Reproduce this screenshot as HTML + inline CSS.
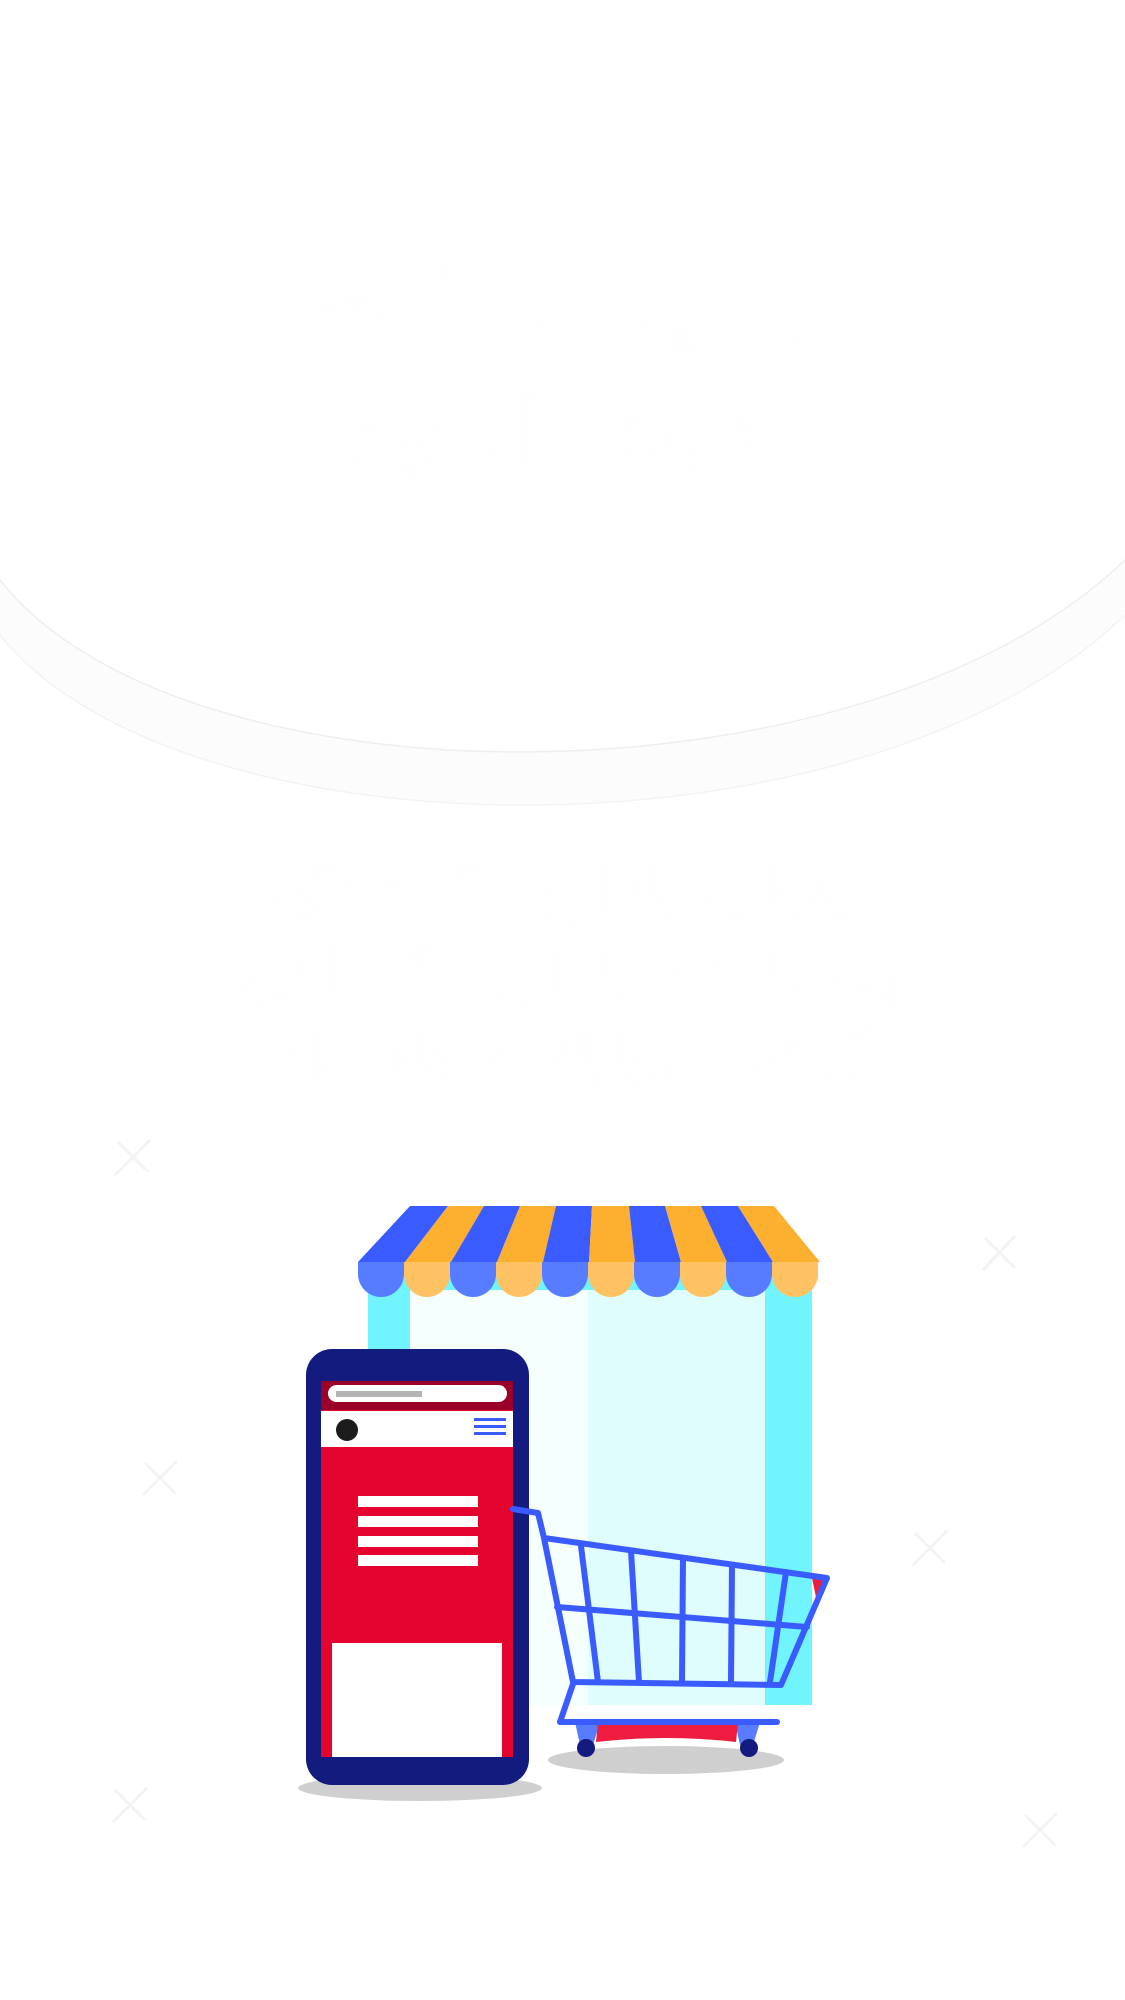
<!DOCTYPE html>
<html><head><meta charset="utf-8"><style>
html,body{margin:0;padding:0;background:#fff;}
body{width:1125px;height:2000px;position:relative;overflow:hidden;font-family:"Liberation Sans","Noto Sans CJK SC",sans-serif;}
.t{position:absolute;left:0;width:1125px;text-align:center;color:#fff;font-weight:bold;direction:rtl;text-shadow:0 0 1px #f6f6f6;}
</style></head><body>
<div class="t" style="top:240px;font-size:88px;line-height:130px;">به چی مارکت<br>خوش آمدید</div>
<div class="t" style="top:850px;font-size:58px;line-height:82px;">اینجا یه بازار بزرگ خانگیه<br>چی مارکت بازار بزرگ را توی<br>گوشی موبایلتون جای داده</div>
<svg width="1125" height="2000" style="position:absolute;left:0;top:0" viewBox="0 0 1125 2000">
<path d="M0 635 C 180 860 860 870 1125 615 L1125 560 C 860 815 180 810 0 580 Z" fill="#fcfcfc"/>
<path d="M0 580 C 180 810 860 815 1125 560" fill="none" stroke="#eeeeee" stroke-width="1.5"/>
<path d="M0 635 C 180 860 860 870 1125 615" fill="none" stroke="#f3f3f3" stroke-width="1.5"/>
<g stroke="#f3f3f3" stroke-width="3" fill="none">
<path d="M118 1142 L148 1172 M150 1140 L115 1175"/>
<path d="M985 1238 L1015 1268 M1015 1236 L983 1270"/>
<path d="M145 1463 L175 1493 M177 1461 L143 1495"/>
<path d="M915 1533 L945 1563 M947 1531 L913 1565"/>
<path d="M115 1790 L145 1820 M147 1788 L113 1822"/>
<path d="M1025 1815 L1055 1845 M1057 1813 L1023 1847"/>
</g>
<rect x="368" y="1270" width="444" height="435" fill="#72f4fe"/>
<rect x="410" y="1290" width="178" height="415" fill="#f5fffe"/>
<rect x="588" y="1290" width="177" height="415" fill="#e0fdfd"/>
<g>
<polygon points="358,1262 410,1206 448,1206 405,1262" fill="#3a5bff"/>
<polygon points="405,1262 448,1206 484,1206 451,1262" fill="#fdb02f"/>
<polygon points="451,1262 484,1206 520,1206 497,1262" fill="#3a5bff"/>
<polygon points="497,1262 520,1206 556,1206 543,1262" fill="#fdb02f"/>
<polygon points="543,1262 556,1206 592,1206 589,1262" fill="#3a5bff"/>
<polygon points="589,1262 592,1206 629,1206 635,1262" fill="#fdb02f"/>
<polygon points="635,1262 629,1206 665,1206 681,1262" fill="#3a5bff"/>
<polygon points="681,1262 665,1206 701,1206 727,1262" fill="#fdb02f"/>
<polygon points="727,1262 701,1206 738,1206 773,1262" fill="#3a5bff"/>
<polygon points="773,1262 738,1206 774,1206 820,1262" fill="#fdb02f"/>
</g>
<g>
<path d="M358 1262 h46 v12 a23 23 0 0 1 -46 0z" fill="#577cff"/>
<path d="M404 1262 h46 v12 a23 23 0 0 1 -46 0z" fill="#fec263"/>
<path d="M450 1262 h46 v12 a23 23 0 0 1 -46 0z" fill="#577cff"/>
<path d="M496 1262 h46 v12 a23 23 0 0 1 -46 0z" fill="#fec263"/>
<path d="M542 1262 h46 v12 a23 23 0 0 1 -46 0z" fill="#577cff"/>
<path d="M588 1262 h46 v12 a23 23 0 0 1 -46 0z" fill="#fec263"/>
<path d="M634 1262 h46 v12 a23 23 0 0 1 -46 0z" fill="#577cff"/>
<path d="M680 1262 h46 v12 a23 23 0 0 1 -46 0z" fill="#fec263"/>
<path d="M726 1262 h46 v12 a23 23 0 0 1 -46 0z" fill="#577cff"/>
<path d="M772 1262 h46 v12 a23 23 0 0 1 -46 0z" fill="#fec263"/>
</g>
<ellipse cx="420" cy="1788" rx="122" ry="13" fill="#cfcfcf"/>
<ellipse cx="666" cy="1760" rx="118" ry="14" fill="#cfcfcf"/>
<rect x="306" y="1349" width="223" height="436" rx="26" fill="#141b7f"/>
<rect x="321" y="1381" width="192" height="376" fill="#e4032e"/>
<rect x="321" y="1381" width="192" height="29" fill="#9b0028"/>
<rect x="328" y="1385" width="179" height="17" rx="8.5" fill="#fff"/>
<rect x="336" y="1391" width="86" height="6" fill="#b3b3b3"/>
<rect x="321" y="1411" width="192" height="36" fill="#fff"/>
<circle cx="347" cy="1430" r="11" fill="#1c1c1c"/>
<g fill="#3a5bff"><rect x="474" y="1418" width="32" height="3"/><rect x="474" y="1425" width="32" height="3"/><rect x="474" y="1432" width="32" height="3"/></g>
<g fill="#fff"><rect x="358" y="1496" width="120" height="11"/><rect x="358" y="1516" width="120" height="11"/><rect x="358" y="1536" width="120" height="11"/><rect x="358" y="1555" width="120" height="11"/></g>
<rect x="332" y="1643" width="170" height="114" fill="#fff"/>
<polygon points="812,1578 827,1578 817,1602" fill="#ee1c3f"/>
<polygon points="575,1722 600,1722 593,1745 580,1745" fill="#577cff"/>
<polygon points="735,1722 760,1722 753,1745 740,1745" fill="#577cff"/>
<path d="M598 1722 H738 L736 1742 Q666 1734 596 1742Z" fill="#ee1c3f"/>
<circle cx="586" cy="1748" r="9" fill="#141b7f"/>
<circle cx="749" cy="1748" r="9" fill="#141b7f"/>
<g stroke="#3a5bff" stroke-width="6" fill="none" stroke-linejoin="round" stroke-linecap="round">
<path d="M513 1509 L538 1513 L544 1538 L827 1578 L781 1685 L573 1682 L544 1538"/>
<path d="M557 1607 L807 1627"/>
<path d="M581 1546 L598 1682 M631 1551 L639 1682 M683 1558 L682 1682 M732 1565 L731 1682 M786 1572 L770 1682"/>
<path d="M573 1684 L560 1722 L777 1722"/>
</g>
</svg>
</body></html>
